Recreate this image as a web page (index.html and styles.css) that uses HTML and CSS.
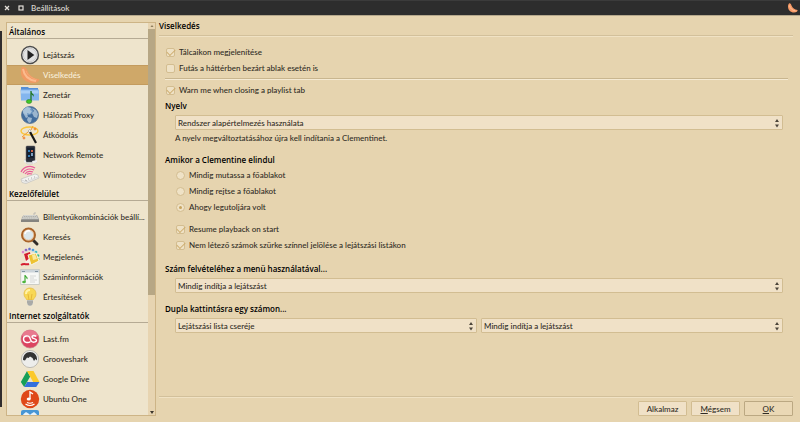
FILE: index.html
```html
<!DOCTYPE html>
<html lang="hu">
<head>
    <meta charset="UTF-8">
    <meta name="viewport" content="width=device-width, initial-scale=1.0">
    <title>Beállítások</title>
    <link rel="stylesheet" href="styles.css">
</head>
<body>
    <header class="titlebar">
        <button class="window-button" type="button" aria-label="Bezárás">
            <svg viewBox="0 0 8 8"><path d="M2 2l4 4M6 2L2 6" stroke="#e4e0da" stroke-width="1.3"/></svg>
        </button>
        <button class="window-button" type="button" aria-label="Teljes méret">
            <svg viewBox="0 0 8 8"><rect x="2" y="2" width="4" height="4" fill="none" stroke="#e4e0da" stroke-width="1.2"/></svg>
        </button>
        <span class="window-title">Beállítások</span>
        <svg class="app-icon" viewBox="0 0 20 20"><path d="M2 1C4 0 6 2 7 5C9 10 13 13 19 14C20 16 17 19 12 19C5 19 0 14 0 7C0 4 1 2 2 1Z" fill="#f79a66"/><path d="M3 5C4 11 9 15 15 16" fill="none" stroke="#ffc19a" stroke-width="2"/></svg>
    </header>

    <div class="window">
        <div class="edge"></div>

        <div class="sidebar">
            <nav class="pages">
                <h2>Általános</h2>
                <ul>
                    <li><a href="#"><svg viewBox="0 0 20 20"><circle cx="10" cy="10" r="8.4" fill="#f5f5f5" stroke="#4c4c4c" stroke-width="1.5"/><circle cx="10" cy="10" r="6.7" fill="#e2e2e2" stroke="#bbb" stroke-width=".7"/><path d="M7.5 5v10l6.8-5z" fill="#222"/></svg>Lejátszás</a></li>
                    <li><a href="#" class="selected"><svg viewBox="0 0 20 20"><path d="M2 2C5 1 7 4 8 7C10 11 14 14 19 14C20 16 17 18 13 18C6 18 0 13 1 6C1 4 1 3 2 2Z" fill="#f09a63"/><path d="M3 4C4 10 8 15 16 16" fill="none" stroke="#fbbb8e" stroke-width="2"/><path d="M6 6C8 11 12 13 17 15" fill="none" stroke="#f7a979"/></svg>Viselkedés</a></li>
                    <li><a href="#"><svg viewBox="0 0 20 20"><path d="M1 2h7l1 1h9v12H1z" fill="#568fd6"/><path d="M.5 4.500h18.500V15.500H1z" fill="#83b5ee"/><path d="M1 5.500h17.500v3H1z" fill="#a9cef6"/><path d="M11 6v10" stroke="#207522" stroke-width="1.300"/><path d="M11 6c0 3 4 2 2.500 6c0-2-2-2-2.500-3z" fill="#207522"/><ellipse cx="9" cy="16.500" rx="2.700" ry="2" fill="#41c727" stroke="#207522" stroke-width=".5"/></svg>Zenetár</a></li>
                    <li><a href="#"><svg viewBox="0 0 20 20"><circle cx="10" cy="10" r="8.500" fill="#426d9e" stroke="#557394" stroke-width=".8"/><ellipse cx="8" cy="6" rx="5" ry="4" fill="#6c96c2"/><path d="M3 5l4-3l4 1l-1 2l2 1l-2 3l-3-1l1 4l-2 1l-3-5zM12 3l4 2l2 4l-1 4l-3-1l-2-4l2-2zM8 12l4 1l-1 4l-2 1l-2-3z" fill="#c2d4e2" opacity=".7"/></svg>Hálózati Proxy</a></li>
                    <li><a href="#"><svg viewBox="0 0 20 20"><ellipse cx="9.500" cy="6" rx="8.500" ry="4" fill="none" stroke="#fac53c" stroke-width="1.400"/><path d="M9 5l7 13" stroke="#171717" stroke-width="2.200"/><path d="M9 5l1.200 2" stroke="#eee" stroke-width="2.200"/><path d="M2 12l6-5M13 1l-2 4" stroke="#f49b2d"/><path d="M15 2l.6 1.400L17 4l-1.400.6L15 6l-.6-1.400L13 4l1.400-.6zM4 11l.6 1.400L6 13l-1.400.6L4 15l-.6-1.400L2 13l1.400-.6z" fill="#f0771d"/></svg>Átkódolás</a></li>
                    <li><a href="#"><svg viewBox="0 0 20 20"><path d="M4 15l9-1l4 3l-5 2H7z" fill="#e9e9e9" stroke="#bbb" stroke-width=".5"/><rect x="6" y="1" width="9" height="16" rx="1" fill="#292d38" stroke="#666" stroke-width=".5"/><path d="M7 3h7v10H7z" fill="#15202f"/><path d="M8 5h2v2H8zM8 10h2v2H8z" fill="#377db6"/><path d="M11 5h2v2h-2z" fill="#cf6447"/><path d="M11 8h2v3h-2z" fill="#7e9fc0"/><path d="M4 15l2 1v2l-2-1zM12 16l5-1v2l-4 2z" fill="#eee"/></svg>Network Remote</a></li>
                    <li><a href="#"><svg viewBox="0 0 20 20"><path d="M1 14l14-5l3 1l1 3L6 18.500l-4-1z" fill="#f3f3f0" stroke="#b8b8b8" stroke-width=".6"/><path d="M2 15l4 2l12-5" fill="none" stroke="#cbcbcb" stroke-width=".7"/><path d="M5 15l2 1M8 14h1M11 13h1M14 12h1" stroke="#aaa"/><path d="M1 7c3-6 10-7 14-4M3 8c2-4 7-5 11-3M5 9c2-3 5-3 8-2M7 9.500c1-1 3-1 5-.5" fill="none" stroke="#ea5b98" stroke-width="1.200"/></svg>Wiimotedev</a></li>
                </ul>

                <h2>Kezelőfelület</h2>
                <ul>
                    <li><a href="#"><svg viewBox="0 0 20 20"><path d="M2 10l2-2h13l2 4v3H1z" fill="#aaa"/><path d="M1 12.500h18V15H1z" fill="#85847f"/><path d="M2 12l2-4h12l2 4z" fill="#d5d5d0"/><path d="M4 9.500h12M3.500 11h13" stroke="#a5a5a0" stroke-width=".8" stroke-dasharray="1.200 .6"/><path d="M14 8V6h2" fill="none" stroke="#aaa" stroke-width=".7"/></svg>Billentyűkombinációk beállí...</a></li>
                    <li><a href="#"><svg viewBox="0 0 20 20"><path d="M13 13l4 4" stroke="#302b28" stroke-width="3" stroke-linecap="round"/><circle cx="8.500" cy="8" r="6.500" fill="#dce7ea" stroke="#a96328" stroke-width="2"/><circle cx="8.500" cy="8" r="5.200" fill="none" stroke="#eca765" stroke-width=".6"/><path d="M5 7c0-2 2-4 5-3" fill="none" stroke="#fff" stroke-width="1.500"/></svg>Keresés</a></li>
                    <li><a href="#"><svg viewBox="0 0 20 20"><g stroke="#fff" stroke-width=".3"><circle cx="3" cy="5" r="1.500" fill="#d87cc0"/><circle cx="6" cy="3" r="1.600" fill="#8c63b8"/><circle cx="9.500" cy="2" r="1.600" fill="#6670c8"/><circle cx="13" cy="3" r="1.600" fill="#4b9ddb"/><circle cx="16" cy="5" r="1.600" fill="#42b9c1"/><circle cx="18" cy="8.500" r="1.500" fill="#39b980"/><circle cx="18.500" cy="12" r="1.300" fill="#7bc146"/></g><path d="M4 7l7-2l3 10l-8 3z" fill="#f5eee6"/><path d="M4 7l6-2l1 5l-5 4z" fill="#d21e2d"/><path d="M8 8l8-2l3 8l-8 4z" fill="#edc233" stroke="#f8f5e5"/><path d="M12 8l3-1l2 5l-4 1z" fill="#fae89c"/><path d="M1 18c3-2 5 0 8-1" fill="none" stroke="#d51e30" stroke-width="2"/></svg>Megjelenés</a></li>
                    <li><a href="#"><svg viewBox="0 0 20 20"><rect x=".8" y="2.500" width="18.400" height="15" fill="#f7f8f6" stroke="#bbbfbb" stroke-width=".7"/><path d="M1 3h18v2.500H1z" fill="#cdd5db"/><path d="M2 4.500h3M15 4.500h3" stroke="#8294a1"/><path d="M5 8v7M5 8c0 2 3 2 2 4" fill="none" stroke="#35a72a" stroke-width="1.100"/><ellipse cx="4" cy="15" rx="1.800" ry="1.200" fill="#4fb63f"/><path d="M10 9h6M10 11h4M10 13h7M10 15h5" stroke="#d1d4d1" stroke-width=".9"/></svg>Száminformációk</a></li>
                    <li><a href="#"><svg viewBox="0 0 20 20"><path d="M7 13C6 11 4 10 4 7C4 3 7 1 10 1s6 2 6 6c0 3-2 4-3 6z" fill="#f8d855" stroke="#e2b942" stroke-width=".7"/><path d="M6 7c0-3 2-4 4-4" fill="none" stroke="#fff2a9" stroke-width="2"/><path d="M8 7l1 6M12 7l-1 6" stroke="#dca72e" stroke-width=".7"/><path d="M7 13h6v4l-2 2H9l-2-2z" fill="#bcbdb9"/><path d="M7 15h6M8 17h4" stroke="#888" stroke-width=".7"/></svg>Értesítések</a></li>
                </ul>

                <h2>Internet szolgáltatók</h2>
                <ul>
                    <li><a href="#"><svg viewBox="0 0 20 20"><circle cx="10" cy="10" r="9" fill="#dc4360" stroke="#c67884" stroke-width=".7"/><path d="M2 7a8.300 8.300 0 0 1 16 0c-5 2-11 2-16 0z" fill="#e8798e"/><path d="M10.500 12.500C8 14.500 3.500 13.500 3.500 10S8.500 6 9.700 8.500l1.200 3c1 2.500 5.600 2 5.600-.2c0-2.300-4.500-1-4.500-3.300c0-2 3-2 4-.5" fill="none" stroke="#fff" stroke-width="1.400"/></svg>Last.fm</a></li>
                    <li><a href="#"><svg viewBox="0 0 20 20"><circle cx="10" cy="10" r="8.600" fill="#ededeb" stroke="#aaa9a5" stroke-width=".7"/><path d="M3 11C3 6 6 3 10 3s7.500 3 7 8.500L15.500 10L14 12L12.500 9L10 7.500L8.500 9L7 8.500L5 11.500z" fill="#343434"/></svg>Grooveshark</a></li>
                    <li><a href="#"><svg viewBox="0 0 20 20"><path d="M7 2L.8 13l3.400 5l6-10.500z" fill="#169f58"/><path d="M7 2h6.500l6 11h-6.400z" fill="#fbc92d"/><path d="M4.200 18l3-5h12.300l-3.300 5z" fill="#3470dd"/></svg>Google Drive</a></li>
                    <li><a href="#"><svg viewBox="0 0 20 20"><circle cx="10" cy="10" r="9.200" fill="#df4819"/><ellipse cx="8.700" cy="10" rx="2" ry="1.600" fill="#fff"/><path d="M10 10V3l3 2" fill="none" stroke="#fff" stroke-width="1.300"/><path d="M7 13.500c2 1 4 1 6 0M5.500 15c3 2 6 2 9 0" fill="none" stroke="#fff" stroke-width="1.200"/></svg>Ubuntu One</a></li>
                    <li><a href="#"><svg viewBox="0 0 20 20"><rect x="1" y="1" width="18" height="18" rx="2" fill="#4796d5"/><path d="M6 3l4 2.500L6 8L3 5.500zM14 3l3 2.500L14 8l-4-2.500zM6 8l4 2.500L6 13l-3-2.500zM14 8l3 2.500L14 13l-4-2.500zM6 14l4-2.500l4 2.500l-4 3z" fill="#e7f2fb"/></svg>Dropbox</a></li>
                </ul>
            </nav>
            <div class="scrollbar">
                <svg viewBox="0 0 6 6"><path d="M1.500 4h3L3 2z" fill="#8c7b5c"/></svg>
                <div class="trough"><div class="thumb"></div></div>
                <svg viewBox="0 0 6 6"><path d="M1 2h4L3 5z" fill="#3b352b"/></svg>
            </div>
        </div>

        <main>
            <h1>Viselkedés</h1>
            <form class="settings" id="settings">
                <label class="option"><input type="checkbox" checked>Tálcaikon megjelenítése</label>
                <label class="option"><input type="checkbox">Futás a háttérben bezárt ablak esetén is</label>
                <hr>
                <label class="option"><input type="checkbox" checked>Warn me when closing a playlist tab</label>

                <section>
                    <h2><label for="language">Nyelv</label></h2>
                    <div class="fields">
                        <div class="combo">
                            <select id="language"><option>Rendszer alapértelmezés használata</option></select>
                            <svg viewBox="0 0 4 10"><path d="M0 4h4L2 1zM0 6.500h4L2 9.500z"/></svg>
                        </div>
                    </div>
                    <p>A nyelv megváltoztatásához újra kell indítania a Clementinet.</p>
                </section>

                <section>
                    <h2>Amikor a Clementine elindul</h2>
                    <div class="options">
                        <label class="option"><input type="radio" name="startup">Mindig mutassa a főablakot</label>
                        <label class="option"><input type="radio" name="startup">Mindig rejtse a főablakot</label>
                        <label class="option"><input type="radio" name="startup" checked>Ahogy legutoljára volt</label>
                    </div>
                    <div class="options">
                        <label class="option"><input type="checkbox" checked>Resume playback on start</label>
                        <label class="option"><input type="checkbox" checked>Nem létező számok szürke színnel jelölése a lejátszási listákon</label>
                    </div>
                </section>

                <section>
                    <h2><label for="menu-add">Szám felvételéhez a menü használatával...</label></h2>
                    <div class="fields">
                        <div class="combo">
                            <select id="menu-add"><option>Mindig indítja a lejátszást</option></select>
                            <svg viewBox="0 0 4 10"><path d="M0 4h4L2 1zM0 6.500h4L2 9.500z"/></svg>
                        </div>
                    </div>
                </section>

                <section>
                    <h2><label for="double-click">Dupla kattintásra egy számon...</label></h2>
                    <div class="fields">
                        <div class="combo">
                            <select id="double-click"><option>Lejátszási lista cseréje</option></select>
                            <svg viewBox="0 0 4 10"><path d="M0 4h4L2 1zM0 6.500h4L2 9.500z"/></svg>
                        </div>
                        <div class="combo">
                            <select aria-label="Lejátszás dupla kattintásra"><option>Mindig indítja a lejátszást</option></select>
                            <svg viewBox="0 0 4 10"><path d="M0 4h4L2 1zM0 6.500h4L2 9.500z"/></svg>
                        </div>
                    </div>
                </section>
            </form>

            <footer>
                <button class="button" type="button">Alkalmaz</button>
                <button class="button" type="button"><u>M</u>égsem</button>
                <button class="button default" type="submit" form="settings"><u>O</u>K</button>
            </footer>
        </main>
    </div>
</body>
</html>
```
FILE: styles.css
```css
* {
    margin: 0;
    padding: 0;
    box-sizing: border-box;
}

body {
    display: flex;
    flex-direction: column;
    height: 100vh;
    background-color: #e6d4af;
    color: #302c25;
    font-family: Lato, "Noto Sans", sans-serif;
    font-size: 8px;
    font-weight: 500;
    line-height: 10px;
}

button,
select {
    font: inherit;
    color: inherit;
}

h1,
h2 {
    color: #000;
    font-family: "Open Sans", "Noto Sans", sans-serif;
    font-size: 8px;
    font-weight: 600;
}

.titlebar {
    display: flex;
    flex: none;
    align-items: center;
    gap: 6px;
    height: 16px;
    padding: 0 2px 0 3px;
    background-color: #2d2d2d;
    border-top: 1px solid #3b3b3b;
    border-bottom: 1px solid #b5a88c;
    color: #d6d2ca;
}

.window-button {
    display: flex;
    width: 8px;
    height: 8px;
    background: none;
    border: none;
}

.window-title {
    flex: 1;
    font-weight: 600;
}

.app-icon {
    width: 10px;
    height: 10px;
}

.window {
    display: flex;
    flex: 1;
    min-height: 0;
}

.edge {
    width: 2px;
    margin: 15px 4px 15px 0;
    background-color: #302c2d;
}

/* Page list */

.sidebar {
    display: flex;
    flex: none;
    width: 150px;
    margin: 6px 3px 6px 0;
    background-color: #eee4cc;
    border: 1px solid #cdb486;
}

.pages {
    flex: 1;
    min-width: 0;
    overflow: hidden;
}

.pages h2 {
    height: 16px;
    margin-bottom: 6px;
    padding: 4px 2px 0;
    border-bottom: 1px solid #b5aa94;
}

.pages ul {
    list-style: none;
}

.pages a {
    display: flex;
    align-items: center;
    gap: 3px;
    height: 20px;
    padding-left: 13px;
    color: inherit;
    text-decoration: none;
    white-space: nowrap;
}

.pages a svg {
    flex: none;
    width: 20px;
    height: 20px;
}

.pages .selected {
    background-color: #cfa869;
    border-top: 1px solid #c39b5e;
    border-bottom: 1px solid #c39b5e;
    color: #f8efdc;
}

.scrollbar {
    display: flex;
    flex-direction: column;
    align-items: center;
    width: 7px;
    background-color: #e7d4b1;
}

.scrollbar svg {
    width: 6px;
    height: 6px;
}

.trough {
    flex: 1;
    width: 100%;
}

.thumb {
    height: 70%;
    background-color: #b7a785;
}

/* Settings form */

main {
    display: flex;
    flex: 1;
    flex-direction: column;
    min-width: 0;
    padding: 0 7px 6px 0;
}

h1 {
    height: 21px;
    padding-top: 5px;
    border-bottom: 1px solid #f0e2c4;
    box-shadow: inset 0 -1px #d2c09b;
}

.settings {
    flex: 1;
    padding: 7px 5px 0 6px;
}

hr {
    height: 2px;
    margin: 2px 0;
    border: none;
    border-top: 1px solid #c9b68f;
    border-bottom: 1px solid #f5ead3;
}

section {
    margin-bottom: 8px;
}

section h2 {
    height: 15px;
    line-height: 15px;
}

.option {
    display: flex;
    align-items: center;
    gap: 4px;
    height: 16px;
}

.option input {
    display: grid;
    place-items: center;
    width: 9px;
    height: 9px;
    margin-left: 1px;
    appearance: none;
    background-color: #efe2c6;
    border: 1px solid #d3bd90;
    border-radius: 2px;
}

.option input[type="radio"] {
    border-radius: 50%;
}

.option input[type="checkbox"]:checked::before {
    content: "";
    width: 7px;
    height: 4px;
    margin-bottom: 2px;
    border-left: 1px solid #cfae70;
    border-bottom: 1px solid #cfae70;
    transform: rotate(-45deg);
}

.option input[type="radio"]:checked::before {
    content: "";
    width: 3px;
    height: 3px;
    background-color: #c6a35f;
    border-radius: 50%;
}

.options {
    padding-left: 10px;
}

.options + .options {
    margin-top: 6px;
}

.fields {
    display: flex;
    gap: 4px;
    margin: 2px 5px 2px 10px;
}

.combo {
    display: flex;
    flex: 1;
    position: relative;
}

.combo select {
    width: 100%;
    height: 15px;
    padding: 0 12px 0 2px;
    appearance: none;
    background-color: #f0e1c7;
    border: 1px solid #d2bd92;
    border-radius: 1px;
}

.combo svg {
    position: absolute;
    top: 3px;
    right: 4px;
    width: 4px;
    height: 10px;
    fill: #4b443a;
    pointer-events: none;
}

section p {
    padding-left: 10px;
    line-height: 12px;
}

footer {
    display: flex;
    justify-content: flex-end;
    gap: 4px;
    padding-top: 4px;
    border-top: 1px solid #d2c09b;
    box-shadow: inset 0 1px #f0e2c4;
}

.button {
    width: 49px;
    height: 15px;
    background-color: #f0e1c7;
    border: 1px solid #d2bd92;
    border-radius: 1px;
}

.button.default {
    background-color: #ead8b5;
    border-color: #bba882;
}
```
